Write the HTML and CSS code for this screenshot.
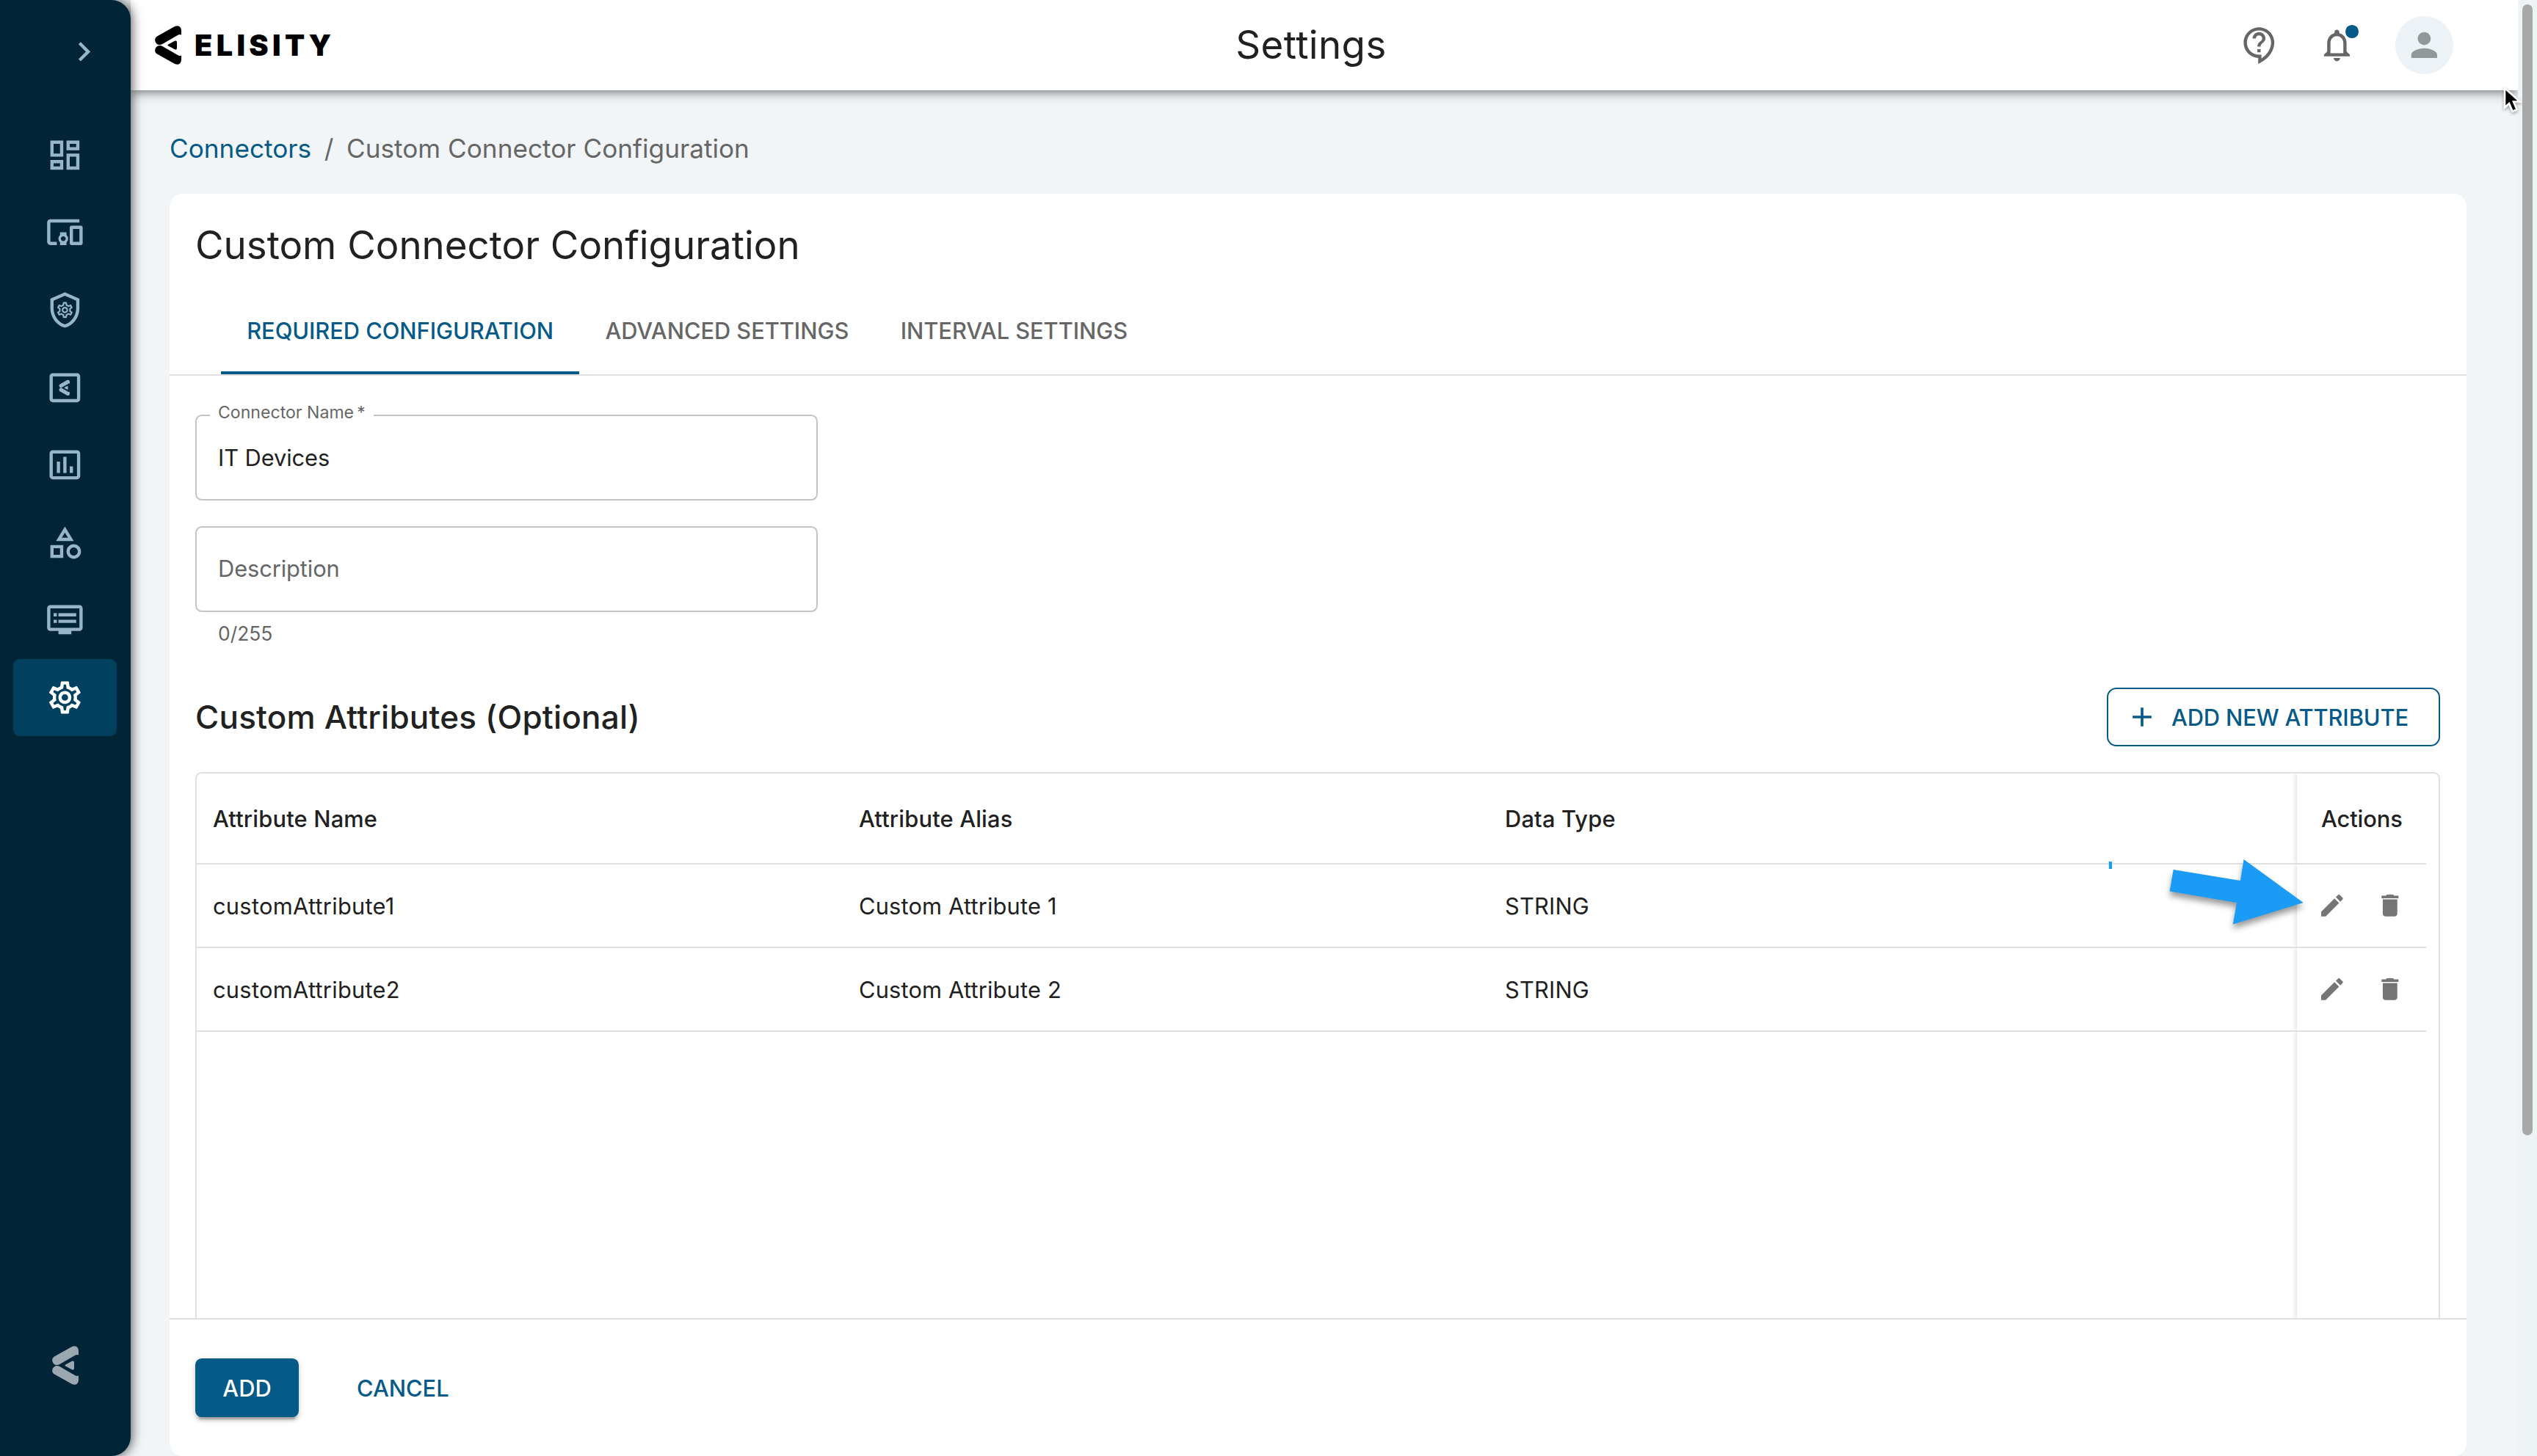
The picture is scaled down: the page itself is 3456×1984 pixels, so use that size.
FILE: index.html
```html
<!DOCTYPE html>
<html lang="en">
<head>
<meta charset="utf-8">
<title>Settings</title>
<link rel="stylesheet" href="styles.css">
</head>
<body>
<svg class="defs" width="0" height="0" aria-hidden="true">
  <symbol id="mark" viewBox="0 0 36 53">
    <path d="M3.4 14.2 26.6 1.2C32-1.6 36 1.4 36 7v5.6c-1.800-.9-3.200-.6-5 .4L10.200 25.100C6.600 27.200 2.500 25.900.9 22.400-.7 19 .4 15.900 3.400 14.200z"/>
    <path d="M3.400 38.800 26.600 51.800C32 54.600 36 51.600 36 46v-5.600c-1.800.9-3.200.6-5-.4L10.200 27.900C6.600 25.800 2.500 27.100.9 30.600-.7 34 .4 37.100 3.400 38.800z"/>
    <path d="M18.200 25.400 27 20.700C29 19.800 30 20.900 30 23v7c0 2.100-1 3.200-3 2.300L18.200 27.600C17.200 27 17.200 26 18.200 25.400z"/>
  </symbol>
  <symbol id="gear" viewBox="0 0 24 24">
    <path d="M19.43 12.98c.04-.32.07-.64.07-.98 0-.34-.03-.66-.07-.98l2.11-1.65c.19-.15.24-.42.12-.64l-2-3.46c-.09-.16-.26-.25-.44-.25-.06 0-.12.01-.17.03l-2.49 1c-.52-.4-1.08-.73-1.69-.98l-.38-2.65C14.46 2.18 14.25 2 14 2h-4c-.25 0-.46.18-.49.42l-.38 2.65c-.61.25-1.17.59-1.69.98l-2.49-1c-.06-.02-.12-.03-.18-.03-.17 0-.34.09-.43.25l-2 3.46c-.13.22-.07.49.12.64l2.11 1.65c-.04.32-.07.65-.07.98 0 .33.03.66.07.98l-2.11 1.65c-.19.15-.24.42-.12.64l2 3.46c.09.16.26.25.44.25.06 0 .12-.01.17-.03l2.49-1c.52.4 1.08.73 1.69.98l.38 2.65c.03.24.24.42.49.42h4c.25 0 .46-.18.49-.42l.38-2.65c.61-.25 1.17-.59 1.69-.98l2.49 1c.06.02.12.03.18.03.17 0 .34-.09.43-.25l2-3.46c.12-.22.07-.49-.12-.64l-2.11-1.65zm-1.98-1.71c.04.31.05.52.05.73 0 .21-.02.43-.05.73l-.14 1.13.89.7 1.08.84-.7 1.21-1.27-.51-1.04-.42-.9.68c-.43.32-.84.56-1.25.73l-1.06.43-.16 1.13-.2 1.35h-1.4l-.19-1.35-.16-1.13-1.06-.43c-.43-.18-.83-.41-1.23-.71l-.91-.7-1.06.43-1.27.51-.7-1.21 1.08-.84.89-.7-.14-1.13c-.03-.31-.05-.54-.05-.74s.02-.43.05-.73l.14-1.13-.89-.7-1.08-.84.7-1.21 1.27.51 1.04.42.9-.68c.43-.32.84-.56 1.25-.73l1.06-.43.16-1.13.2-1.35h1.39l.19 1.35.16 1.13 1.06.43c.43.18.83.41 1.23.71l.91.7 1.06-.43 1.27-.51.7 1.21-1.07.85-.89.7.14 1.13zM12 8c-2.21 0-4 1.79-4 4s1.79 4 4 4 4-1.79 4-4-1.79-4-4-4zm0 6c-1.1 0-2-.9-2-2s.9-2 2-2 2 .9 2 2-.9 2-2 2z"/>
  </symbol>
  <symbol id="pencil" viewBox="0 0 24 24">
    <path d="M3 17.250V21h3.750L17.810 9.940l-3.750-3.750L3 17.250zM20.710 7.040c.39-.39.39-1.020 0-1.410l-2.340-2.340a.9959.9959 0 0 0-1.410 0l-1.830 1.830 3.750 3.750 1.830-1.830z"/>
  </symbol>
  <symbol id="trash" viewBox="0 0 24 24">
    <path d="M6 19c0 1.100.9 2 2 2h8c1.100 0 2-.9 2-2V7H6v12zM19 4h-3.500l-1-1h-5l-1 1H5v2h14V4z"/>
  </symbol>
</svg>

<div class="app">
  <nav class="sidebar">
    <div class="expand">
      <svg class="icon" viewBox="0 0 24 24"><path d="M10 6 8.590 7.410 13.170 12l-4.580 4.590L10 18l6-6z"/></svg>
    </div>
    <ul class="menu">
      <li class="menu-item"><svg class="icon" viewBox="0 0 24 24"><path d="M19 5v2h-4V5h4M9 5v6H5V5h4m10 8v6h-4v-6h4M9 17v2H5v-2h4M21 3h-8v6h8V3zM11 3H3v10h8V3zm10 8h-8v10h8V11zm-10 4H3v6h8v-6z"/></svg></li>
      <li class="menu-item"><svg class="icon" viewBox="0 0 24 24"><path d="M3 6h18V4H3c-1.100 0-2 .9-2 2v12c0 1.100.9 2 2 2h4v-2H3V6zm10 6H9v1.780c-.61.55-1 1.330-1 2.220s.39 1.670 1 2.220V20h4v-1.780c.61-.55 1-1.340 1-2.220s-.39-1.670-1-2.220V12zm-2 5.500c-.83 0-1.500-.67-1.500-1.500s.67-1.500 1.500-1.500 1.500.67 1.500 1.500-.67 1.500-1.500 1.500zM22 8h-6c-.5 0-1 .5-1 1v10c0 .5.5 1 1 1h6c.5 0 1-.5 1-1V9c0-.5-.5-1-1-1zm-1 10h-4v-8h4v8z"/></svg></li>
      <li class="menu-item"><svg class="icon" viewBox="0 0 24 24"><path d="M12 1 3 5v6c0 5.550 3.840 10.740 9 12 5.160-1.260 9-6.450 9-12V5l-9-4zm7 10c0 4.520-2.980 8.690-7 9.930-4.020-1.240-7-5.410-7-9.930V6.300l7-3.110 7 3.110V11z"/><use href="#gear" x="6.100" y="6.100" width="11.800" height="11.800"/></svg></li>
      <li class="menu-item"><svg class="icon" viewBox="0 0 24 24"><path d="M19.500 19h-15V5h15v14zm0-16h-15c-1.100 0-2 .9-2 2v14c0 1.100.9 2 2 2h15c1.100 0 2-.9 2-2V5c0-1.100-.9-2-2-2z"/><use href="#mark" x="8.200" y="7.100" width="7" height="9.800"/></svg></li>
      <li class="menu-item"><svg class="icon" viewBox="0 0 24 24"><path d="M9 17H7v-7h2v7zm4 0h-2V7h2v10zm4 0h-2v-4h2v4zm2.500 2.100h-15V5h15v14.100zm0-16.100h-15c-1.100 0-2 .9-2 2v14c0 1.100.9 2 2 2h15c1.100 0 2-.9 2-2V5c0-1.100-.9-2-2-2z"/></svg></li>
      <li class="menu-item"><svg class="icon" viewBox="0 0 24 24"><path d="m12 2-5.500 9h11L12 2zm0 3.840L13.930 9h-3.870L12 5.840zM17.500 13c-2.490 0-4.500 2.010-4.500 4.500s2.010 4.500 4.500 4.500 4.500-2.010 4.500-4.500-2.010-4.500-4.500-4.500zm0 7c-1.380 0-2.500-1.120-2.500-2.500s1.120-2.500 2.500-2.500 2.500 1.120 2.500 2.500-1.120 2.500-2.500 2.500zM3 21.500h8v-8H3v8zm2-6h4v4H5v-4z"/></svg></li>
      <li class="menu-item"><svg class="icon" viewBox="0 0 24 24"><path d="M21 3H3c-1.100 0-2 .9-2 2v12c0 1.100.9 2 2 2h5v2h8v-2h5c1.100 0 2-.9 2-2V5c0-1.100-.9-2-2-2zm0 14H3V5h18v12zm-2-9H8v2h11V8zm0 4H8v2h11v-2zM7 8H5v2h2V8zm0 4H5v2h2v-2z"/></svg></li>
      <li class="menu-item active"><svg class="icon"><use href="#gear"/></svg></li>
    </ul>
    <svg class="sidebar-mark"><use href="#mark"/></svg>
  </nav>

  <div class="main">
    <header class="topbar">
      <div class="brand">
        <svg class="brand-mark"><use href="#mark"/></svg>
        <span class="brand-name">ELISITY</span>
      </div>
      <h1 class="page-title">Settings</h1>
      <div class="tools">
        <svg class="icon help" viewBox="0 0 24 24"><path d="M11 23.590v-3.600c-5.010-.26-9-4.420-9-9.490C2 5.260 6.260 1 11.500 1S21 5.260 21 10.500c0 4.950-3.440 9.930-8.570 12.400l-1.430.69zM11.500 3C7.360 3 4 6.360 4 10.500S7.360 18 11.500 18H13v2.300c3.640-2.300 6-6.080 6-9.800C19 6.360 15.640 3 11.500 3zm-1 11.500h2v2h-2zm2-1.500h-2c0-3.250 3-3 3-5 0-1.100-.9-2-2-2s-2 .9-2 2h-2c0-2.210 1.790-4 4-4s4 1.790 4 4c0 2.500-3 2.750-3 5z"/></svg>
        <div class="bell">
          <svg class="icon" viewBox="0 0 24 24"><path d="M12 22c1.100 0 2-.9 2-2h-4c0 1.100.9 2 2 2zm6-6v-5c0-3.070-1.630-5.640-4.500-6.320V4c0-.83-.67-1.500-1.500-1.500s-1.500.67-1.500 1.500v.68C7.640 5.360 6 7.920 6 11v5l-2 2v1h16v-1l-2-2zm-2 1H8v-6c0-2.480 1.510-4.500 4-4.500s4 2.020 4 4.500v6z"/></svg>
          <span class="dot"></span>
        </div>
        <div class="avatar"><svg class="icon" viewBox="0 0 24 24"><path d="M12 12c2.210 0 4-1.790 4-4s-1.790-4-4-4-4 1.790-4 4 1.790 4 4 4zm0 2c-2.670 0-8 1.340-8 4v2h16v-2c0-2.660-5.330-4-8-4z"/></svg></div>
      </div>
    </header>

    <div class="breadcrumbs">
      <a class="crumb-link">Connectors</a><span class="slash">/</span><span>Custom Connector Configuration</span>
    </div>

    <section class="card">
      <h2 class="card-title">Custom Connector Configuration</h2>
      <div class="tabs">
        <div class="tab selected">REQUIRED CONFIGURATION</div>
        <div class="tab">ADVANCED SETTINGS</div>
        <div class="tab">INTERVAL SETTINGS</div>
      </div>

      <div class="content">
        <div class="field">
          <span class="field-label">Connector Name&#8201;*</span>
          <span>IT Devices</span>
        </div>
        <div class="field empty"><span>Description</span></div>
        <div class="helper">0/255</div>

        <div class="section-head">
          <h3 class="section-title">Custom Attributes (Optional)</h3>
          <div class="outlined-button">
            <svg class="plus" viewBox="0 0 24 24"><path d="M19 13h-6v6h-2v-6H5v-2h6V5h2v6h6v2z"/></svg>
            <span>ADD NEW ATTRIBUTE</span>
          </div>
        </div>

        <div class="table">
          <div class="row head">
            <div class="cell">Attribute Name</div>
            <div class="cell">Attribute Alias</div>
            <div class="cell">Data Type</div>
            <div class="pinned">Actions</div>
          </div>
          <div class="row">
            <div class="cell name">customAttribute1</div>
            <div class="cell">Custom Attribute 1</div>
            <div class="cell">STRING</div>
            <div class="pinned"><svg class="action"><use href="#pencil"/></svg><svg class="action"><use href="#trash"/></svg></div>
          </div>
          <div class="row">
            <div class="cell name">customAttribute2</div>
            <div class="cell">Custom Attribute 2</div>
            <div class="cell">STRING</div>
            <div class="pinned"><svg class="action"><use href="#pencil"/></svg><svg class="action"><use href="#trash"/></svg></div>
          </div>
          <div class="row filler">
            <div class="cell"></div>
            <div class="cell"></div>
            <div class="cell"></div>
            <div class="pinned"></div>
          </div>
        </div>
      </div>

      <footer class="card-footer">
        <div class="primary-button">ADD</div>
        <div class="text-button">CANCEL</div>
      </footer>
    </section>
  </div>

  <div class="scroll-track"><div class="scroll-thumb"></div></div>
</div>

<svg class="callout" viewBox="0 0 290 110">
  <path class="callout-shape" d="M97.700 15 188.900 30 193.500 1 274.700 60 178.800 89.600 183.900 60 92.600 44.600z"/>
  <path class="callout-tick" d="M9.800 4h4.200v10H9.800z"/>
</svg>
<svg class="cursor" viewBox="0 0 30 44">
  <path d="M3 3v26.500l6-5.500 4.600 10.800 6-2.600L15 21.500h8.600z"/>
</svg>
</body>
</html>
```
FILE: styles.css
```css
* {
  box-sizing: border-box;
}

body {
  margin: 0;
  width: 3456px;
  height: 1984px;
  overflow: hidden;
  position: relative;
  background: #f1f5f8;
  color: #212121;
  font-family: Inter, "Liberation Sans", sans-serif;
  font-size: 30.8px;
}

h1, h2, h3, ul {
  margin: 0;
  padding: 0;
  font-weight: 400;
  list-style: none;
}

svg {
  display: block;
  fill: currentColor;
  flex: none;
}

.defs {
  position: absolute;
}

.app {
  display: flex;
  height: 1984px;
}

.icon {
  width: 52.8px;
  height: 52.8px;
}

/* Sidebar */

.sidebar {
  position: relative;
  z-index: 2;
  display: flex;
  flex-direction: column;
  flex: none;
  width: 178px;
  padding-bottom: 97px;
  border-radius: 0 26.4px 26.4px 0;
  background: #012536;
  color: #97b4c8;
  box-shadow: 0 0 16px 1px rgba(0, 0, 0, 0.7);
}

.expand {
  height: 158.4px;
  padding: 44px 0 0 88px;
}

.menu {
  flex: 1;
}

.menu-item {
  display: flex;
  align-items: center;
  justify-content: center;
  width: 141px;
  height: 105.6px;
  margin-left: 18px;
  border-radius: 8.8px;
}

.menu-item.active {
  background: #02405f;
  color: #fff;
}

.sidebar-mark {
  width: 36px;
  height: 53px;
  margin-left: 71px;
  color: #9ba8b1;
}

/* Main column */

.main {
  display: flex;
  flex-direction: column;
  flex: 1;
}

.topbar {
  position: relative;
  display: grid;
  grid-template-columns: 1fr auto 1fr;
  align-items: center;
  flex: none;
  height: 123px;
  padding: 0 69px 0 33px;
  background: #fff;
  box-shadow: 0 4.4px 8.8px -2.2px rgba(0, 0, 0, 0.3), 0 8px 11px rgba(0, 0, 0, 0.15), 0 2px 22px rgba(0, 0, 0, 0.12);
}

.brand {
  display: flex;
  align-items: center;
  gap: 18px;
}

.brand-mark {
  width: 36px;
  height: 53px;
  color: #000;
}

.brand-name {
  color: #000;
  font-size: 39.6px;
  font-weight: 900;
  letter-spacing: 5.4px;
}

.page-title {
  padding-bottom: 2px;
  font-size: 52.8px;
  letter-spacing: 0.4px;
}

.tools {
  display: flex;
  align-items: center;
  justify-content: flex-end;
  margin-right: 19px;
  color: #666;
}

.help {
  margin-right: 52px;
}

.bell {
  position: relative;
  margin-right: 53px;
}

.dot {
  position: absolute;
  top: -1px;
  right: -3px;
  width: 17.6px;
  height: 17.6px;
  border-radius: 50%;
  background: #055a87;
}

.avatar {
  display: flex;
  align-items: center;
  justify-content: center;
  width: 79px;
  height: 79px;
  border-radius: 50%;
  background: #ecf2f5;
  color: #929898;
}

.breadcrumbs {
  display: flex;
  align-items: center;
  flex: none;
  height: 141px;
  padding: 17px 0 0 53px;
  font-size: 35.2px;
  color: #666;
}

.crumb-link {
  color: #055a87;
}

.slash {
  margin: 0 17.6px;
}

/* Card */

.card {
  display: flex;
  flex-direction: column;
  flex: 1;
  margin: 0 70px 0 53px;
  border-radius: 17.6px;
  background: #fff;
}

.card-title {
  display: flex;
  align-items: center;
  height: 126px;
  padding: 13px 35px 0;
  font-size: 52.8px;
}

.tabs {
  display: flex;
  height: 122px;
  padding-left: 70px;
  border-bottom: 2px solid #e0e0e0;
  font-weight: 500;
  letter-spacing: -0.04px;
  color: #666;
}

.tab {
  display: flex;
  align-items: center;
  padding: 4px 35.2px 0;
  border-bottom: 4px solid transparent;
}

.tab.selected {
  border-color: #055a87;
  color: #055a87;
}

.content {
  display: flex;
  flex-direction: column;
  flex: 1;
  padding: 53px 36px 0 35px;
}

.field {
  position: relative;
  display: flex;
  align-items: center;
  width: 848px;
  height: 117px;
  padding-left: 29px;
  border: 2px solid #c4c4c4;
  border-radius: 8.8px;
  letter-spacing: -0.08px;
}

.field.empty {
  margin-top: 35px;
  padding-bottom: 3px;
  color: #666;
}

.field-label {
  position: absolute;
  top: -21px;
  left: 18px;
  padding: 0 11px;
  background: #fff;
  color: #666;
  font-size: 23.1px;
  line-height: 32px;
  letter-spacing: 0;
}

.helper {
  height: 58px;
  padding-left: 31px;
  font-size: 26.4px;
  line-height: 58px;
  color: #666;
}

.section-head {
  display: flex;
  align-items: center;
  justify-content: space-between;
  margin: 45px 0 35px;
}

.section-title {
  font-size: 44px;
  font-weight: 500;
  letter-spacing: 0.2px;
}

.outlined-button {
  display: flex;
  align-items: center;
  gap: 18px;
  width: 454px;
  height: 80px;
  padding-left: 24px;
  border: 2px solid #055a87;
  border-radius: 13px;
  font-weight: 500;
  letter-spacing: -0.12px;
  color: #055a87;
}

.plus {
  width: 44px;
  height: 44px;
}

/* Attribute table */

.table {
  display: flex;
  flex-direction: column;
  flex: 1;
  padding-right: 17px;
  overflow: hidden;
  border: 2px solid #e0e0e0;
  border-bottom: 0;
  border-radius: 8.8px 8.8px 0 0;
  letter-spacing: 0.18px;
}

.row {
  display: grid;
  grid-template-columns: 880px 880px 1fr 176px;
  height: 114px;
  border-bottom: 2px solid #e0e0e0;
}

.row.head {
  height: 124px;
  font-weight: 500;
}

.row.filler {
  flex: 1;
  border-bottom: 0;
}

.cell {
  display: flex;
  align-items: center;
  padding-left: 22px;
}

.cell.name {
  letter-spacing: 0.28px;
}

.pinned {
  display: flex;
  align-items: center;
  gap: 39.6px;
  padding-left: 28px;
  box-shadow: -1px 0 7px rgba(0, 0, 0, 0.16);
  clip-path: inset(0 0 0 -12px);
}

.head .pinned {
  padding: 1px 0 0 33px;
  letter-spacing: -0.1px;
}

.action {
  width: 39.6px;
  height: 39.6px;
  color: #757575;
}

/* Footer */

.card-footer {
  display: flex;
  flex: none;
  height: 188px;
  padding: 53px 35px 0;
  border-top: 2px solid #e0e0e0;
  font-weight: 500;
}

.primary-button {
  display: flex;
  align-items: center;
  justify-content: center;
  width: 141px;
  height: 80px;
  border-radius: 8.8px;
  background: #055a87;
  color: #fff;
  box-shadow: 0 6.6px 2.2px -4.4px rgba(0, 0, 0, 0.2), 0 4.4px 4.4px rgba(0, 0, 0, 0.14), 0 2.2px 11px rgba(0, 0, 0, 0.12);
}

.text-button {
  display: flex;
  align-items: center;
  height: 80px;
  margin-left: 79px;
  color: #055a87;
}

/* Scrollbar */

.scroll-track {
  flex: none;
  width: 26px;
  padding: 6px;
  background: #eef3f6;
  z-index: 1;
}

.scroll-thumb {
  width: 14px;
  height: 1541px;
  border-radius: 7px;
  background: #a8a8a8;
}

/* Annotation over the table and the mouse pointer */

.callout {
  position: absolute;
  left: 2863px;
  top: 1170px;
  width: 290px;
  height: 110px;
  overflow: visible;
  fill: #1a9bf5;
}

.callout-shape {
  filter: drop-shadow(0 6px 4px rgba(0, 0, 0, 0.4));
}

.cursor {
  position: absolute;
  z-index: 3;
  left: 3409px;
  top: 117px;
  width: 30px;
  height: 44px;
  fill: #000;
  stroke: #fff;
  stroke-width: 2.6px;
  filter: drop-shadow(0 2px 2px rgba(0, 0, 0, 0.35));
}
```
